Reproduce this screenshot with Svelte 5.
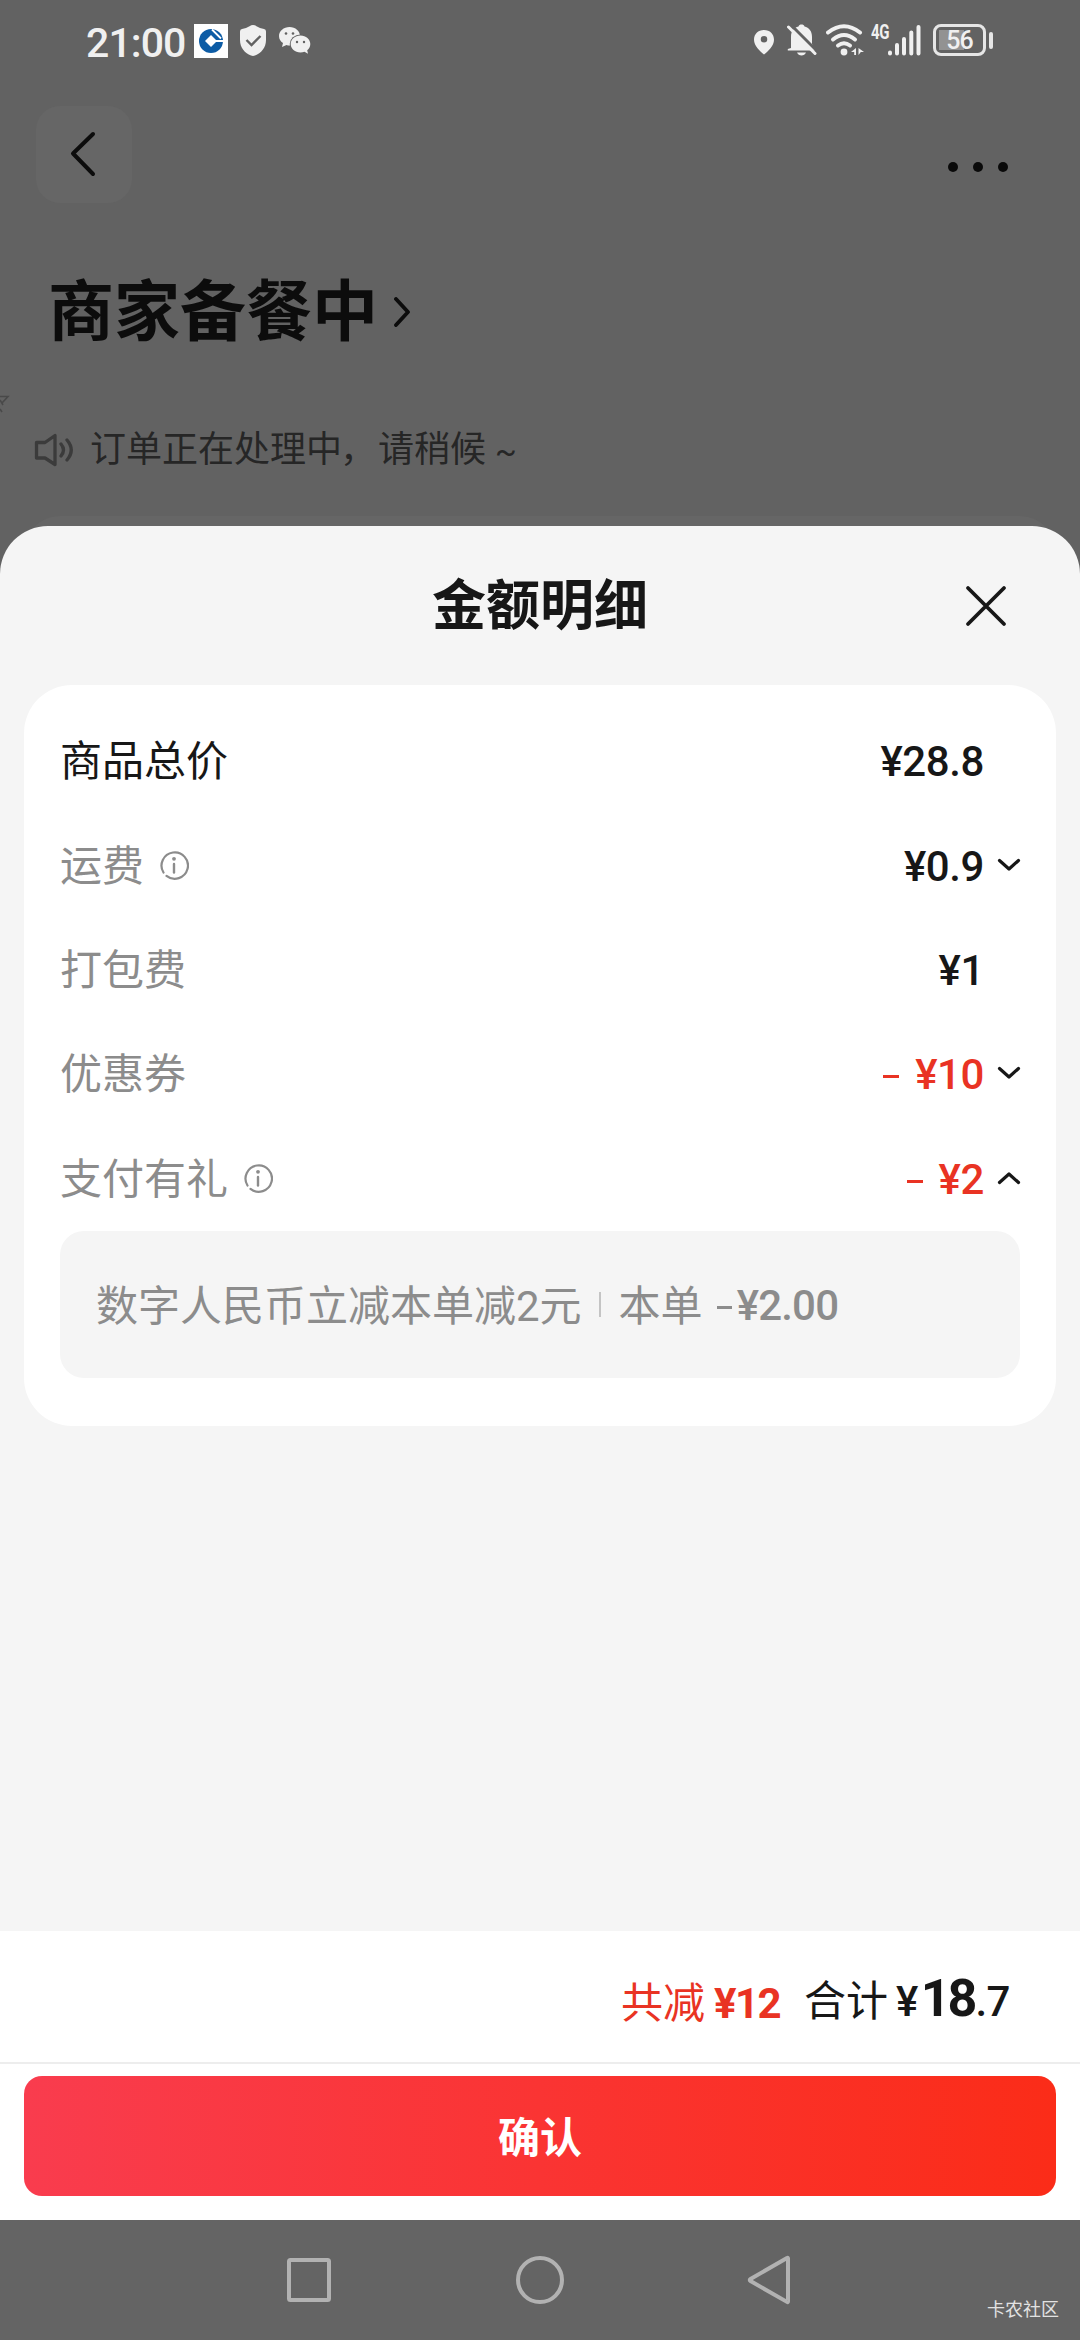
<script lang="ts">
  type Row = {
    label: string;
    amount: string;
    info?: boolean;
    discount?: boolean;
    toggle?: 'open' | 'closed';
  };

  const rows: Row[] = [
    { label: '商品总价', amount: '28.8' },
    { label: '运费', amount: '0.9', info: true, toggle: 'closed' },
    { label: '打包费', amount: '1' },
    { label: '优惠券', amount: '10', discount: true, toggle: 'closed' },
    { label: '支付有礼', amount: '2', info: true, discount: true, toggle: 'open' }
  ];
</script>

<div class="screen">
  <div class="status-bar">
    <span class="time">21:00</span>
    <svg class="bank" width="34" height="34" viewBox="0 0 34 34">
      <rect width="34" height="34" fill="#fff" />
      <circle cx="17" cy="17" r="12" fill="#0d5ca5" />
      <path d="M17 11l6 6-6 6-6-6z" fill="#fff" />
      <path d="M18 5.500l9 9M22 17h9" stroke="#fff" stroke-width="1.800" />
    </svg>
    <svg class="shield" width="26" height="31" viewBox="0 0 26 31">
      <path d="M13 0q2 0 3 1 4 2.500 8 3 2 .4 2 2.500V15c0 8-5 13-11 15.600q-2 .7-4 0C5 28 0 23 0 15V6.500Q0 4.400 2 4q4-.5 8-3 1-1 3-1z" fill="#f0f0f0" />
      <path d="M6.500 15l5 5 9-9" fill="none" stroke="#626262" stroke-width="2.400" />
    </svg>
    <svg class="wechat" width="33" height="28" viewBox="0 0 33 28">
      <path d="M10.500 0C4.700 0 0 4 0 9c0 3 1.500 5.500 4 7l-1 4 4.500-2q1.500.5 3 .5C16.500 18.500 21 14 21 9S16.500 0 10.500 0z" fill="#f0f0f0" />
      <ellipse cx="21.500" cy="17" rx="10.800" ry="9.400" fill="#626262" />
      <path d="M21.500 8.500c-5.500 0-9.800 3.800-9.800 8.500s4.300 8.500 9.800 8.500q2 0 4-.7l3.500 2-.8-3.500c2-1.500 3.100-3.800 3.100-6.300 0-4.700-4.300-8.500-9.800-8.500z" fill="#f0f0f0" />
      <g fill="#626262">
        <circle cx="7" cy="6.500" r="1.300" />
        <circle cx="14" cy="6.500" r="1.300" />
        <circle cx="18" cy="15" r="1.200" />
        <circle cx="25" cy="15" r="1.200" />
      </g>
    </svg>

    <div class="status-right">
      <svg class="pin" width="20" height="25" viewBox="0 0 20 25">
        <path d="M10 0C4 0 0 4.200 0 9.700 0 16 6 21 10 24.500 14 21 20 16 20 9.700 20 4.200 16 0 10 0zm0 6a3 3 0 1 1 0 6.500A3 3 0 0 1 10 6z" fill="#f0f0f0" fill-rule="evenodd" />
      </svg>
      <svg class="bell" width="30" height="32" viewBox="0 0 30 32">
        <path d="M4 24V13C4 7 7 3.500 11.500 2.500 12 1 13 .5 14.500.5S17 1 17.500 2.500C22 3.500 25 7 25 13v7l3 6v.5H.8V25zM10 28.500h9c-.8 2-2.500 3-4.500 3s-3.700-1-4.500-3z" fill="#f0f0f0" />
        <path d="M3.500.5L30 27" stroke="#626262" stroke-width="3" />
        <path d="M1.500 3L28 29.500" stroke="#f0f0f0" stroke-width="3" stroke-linecap="round" />
      </svg>
      <svg class="wifi" width="39" height="32" viewBox="0 0 39 32">
        <g fill="none" stroke="#f0f0f0" stroke-width="4" stroke-linecap="round">
          <path d="M2 8.500Q18 -4 34 8.500" />
          <path d="M7 15.500Q18 6.500 29 15.500" />
          <path d="M12 21.500Q18 17 24 21.500" />
        </g>
        <circle cx="18" cy="28" r="3.400" fill="#f0f0f0" />
        <path d="M30 24v7h-1.800v-3H25zM32.500 24l5.500 4h-3.200l-2.300 3z" fill="#f0f0f0" />
      </svg>
      <span class="network">4G</span>
      <svg class="signal" width="34" height="32" viewBox="0 0 34 32">
        <path d="M3 28.500v1M10 21v8.500M17 15v14.500M24.300 8.500v21M31.500 3v26.500" stroke="#f0f0f0" stroke-width="4" stroke-linecap="round" />
      </svg>
      <div class="battery"><span>56</span></div>
      <div class="battery-nub"></div>
    </div>
  </div>

  <header class="toolbar">
    <div class="back">
      <svg width="26" height="46" viewBox="0 0 26 46">
        <path d="M23 3L3 22.500 23 43" fill="none" stroke="#0c0c0c" stroke-width="4" stroke-linecap="round" stroke-linejoin="round" />
      </svg>
    </div>
    <div class="more"><i></i><i></i><i></i></div>
  </header>

  <div class="order-state">
    <h1>商家备餐中</h1>
    <svg width="18" height="30" viewBox="0 0 18 30">
      <path d="M3 2l12 13L3 28" fill="none" stroke="#0c0c0c" stroke-width="3.800" stroke-linecap="round" stroke-linejoin="round" />
    </svg>
  </div>

  <!-- tail of the rider line, scrolled out on the left -->
  <svg class="scrolled" width="12" height="22" viewBox="0 0 12 22">
    <path d="M0 2.500h8L2 9M0 6l3 5M0 15l2 3" fill="none" stroke="#494949" stroke-width="1.600" />
  </svg>

  <div class="notice">
    <svg width="40" height="34" viewBox="0 0 40 34">
      <g fill="none" stroke="#3b3b3b" stroke-width="3.300" stroke-linecap="round" stroke-linejoin="round">
        <path d="M2.500 9.500h8.500L21 2.500v29L11 25H2.500z" />
        <path d="M27 11q5 6 0 12M33 7q8.500 10 0 20" />
      </g>
    </svg>
    <span>订单正在处理中<em>，</em>请稍候 <small>~</small></span>
  </div>
  <div class="under-card"></div>

  <section class="sheet">
    <div class="sheet-head">
      <h2>金额明细</h2>
      <svg class="close" width="42" height="42" viewBox="0 0 42 42">
        <path d="M3 3l36 36M39 3L3 39" stroke="#171717" stroke-width="3.800" stroke-linecap="round" />
      </svg>
    </div>

    <div class="card">
      {#each rows as row, i}
        <div class="row" class:first={i === 0}>
          <span class="label">{row.label}</span>
          {#if row.info}
            <svg class="info" width="30" height="30" viewBox="0 0 30 30">
              <path d="M4.500 22.500A13.200 13.200 0 1 1 7.500 25.900" fill="none" stroke="#8c8c8c" stroke-width="2.200" stroke-linecap="round" />
              <circle cx="15" cy="8.800" r="1.900" fill="#8c8c8c" />
              <path d="M15 14v8.500" stroke="#8c8c8c" stroke-width="2.400" stroke-linecap="round" />
            </svg>
          {/if}
          <div class="amount" class:discount={row.discount}>
            {#if row.discount}<i class="minus"></i>{/if}
            <span>¥{row.amount}</span>
          </div>
          <div class="toggle">
            {#if row.toggle}
              <svg class:open={row.toggle === 'open'} width="24" height="14" viewBox="0 0 24 14">
                <path d="M2.500 2.500L12 11l9.500-8.500" fill="none" stroke="#171717" stroke-width="3.200" stroke-linecap="round" stroke-linejoin="round" />
              </svg>
            {/if}
          </div>
        </div>
      {/each}

      <div class="detail">
        <span class="desc">数字人民币立减本单减2元</span>
        <i class="bar"></i>
        <span class="desc">本单</span>
        <i class="dash"></i>
        <span class="num">¥2.00</span>
      </div>
    </div>

    <footer>
      <div class="summary">
        <span class="saved">共减</span>
        <span class="saved-num">¥12</span>
        <span class="total">合计</span>
        <span class="total-num">¥<b>18</b>.7</span>
      </div>
      <div class="confirm-wrap">
        <button>确认</button>
      </div>
    </footer>
  </section>

  <nav>
    <svg width="504" height="50" viewBox="0 0 504 50">
      <g fill="none" stroke="#b2b2b2" stroke-width="4" stroke-linejoin="round">
        <rect x="3" y="5" width="40" height="40" rx="1.500" />
        <circle cx="254" cy="25" r="22" />
        <path d="M502 3.500v43q0 1-1 .4L464.500 26q-1.500-1 0-2L501 3q1-.5 1 .5z" />
      </g>
    </svg>
    <span class="watermark">卡农社区</span>
  </nav>
</div>

<style>
  :global(body) {
    margin: 0;
  }

  .screen {
    position: relative;
    display: flex;
    flex-direction: column;
    width: 1080px;
    height: 2340px;
    overflow: hidden;
    background: #626262;
    font-family: Roboto, 'Noto Sans CJK SC', sans-serif;
    color: #171717;
  }

  svg {
    display: block;
    flex: none;
  }

  h1,
  h2 {
    margin: 0;
    font-weight: 700;
  }

  .status-bar {
    display: flex;
    align-items: flex-start;
    box-sizing: border-box;
    height: 106px;
    padding: 24px 88px 0 86px;
    color: #f0f0f0;
  }

  .time {
    width: 108px;
    margin-top: -1px;
    font-size: 41px;
    font-weight: 500;
    line-height: 40px;
    letter-spacing: -0.9px;
  }

  .shield {
    margin: 1px 0 0 12px;
  }

  .wechat {
    margin: 3px 0 0 13px;
  }

  .status-right {
    display: flex;
    align-items: flex-start;
    margin-left: auto;
  }

  .pin {
    margin: 6px 13px 0 0;
  }

  .bell {
    margin-right: 9px;
  }

  .wifi {
    margin-right: 6px;
  }

  .network {
    width: 16px;
    margin-top: 1px;
    font-size: 20px;
    font-weight: 700;
    line-height: 14px;
    letter-spacing: -0.5px;
    white-space: nowrap;
    transform: scaleX(0.75);
    transform-origin: left;
  }

  .signal {
    margin-right: 12px;
  }

  .battery {
    box-sizing: border-box;
    width: 53px;
    height: 32px;
    padding: 3px;
    border: 3px solid #e6e6e6;
    border-radius: 8px;
    background: linear-gradient(#929292, #929292) 3px 3px / 25px 20px no-repeat;
    font-size: 25px;
    font-weight: 500;
    line-height: 22px;
    letter-spacing: -1px;
    text-align: center;
  }

  .battery-nub {
    width: 4px;
    height: 17px;
    margin: 8px -1px 0 3px;
    border-radius: 2px;
    background: #e6e6e6;
  }

  .toolbar {
    display: flex;
    justify-content: space-between;
    height: 97px;
    padding: 0 72px 0 36px;
  }

  .back {
    display: flex;
    align-items: center;
    justify-content: center;
    box-sizing: border-box;
    width: 96px;
    height: 97px;
    padding: 0 2px 2px 0;
    border-radius: 24px;
    background: #666;
  }

  .more {
    display: flex;
    gap: 15px;
    margin-top: 56px;
  }

  .more i {
    width: 10px;
    height: 10px;
    border-radius: 50%;
    background: #0a0a0a;
  }

  .order-state {
    display: flex;
    align-items: center;
    gap: 15px;
    height: 100px;
    margin-top: 60px;
    padding-left: 48px;
  }

  .order-state h1 {
    font-size: 66px;
    line-height: 100px;
    color: #0c0c0c;
  }

  .order-state svg {
    margin-top: -2px;
  }

  .scrolled {
    margin: 31px 0 -53px;
  }

  .notice {
    display: flex;
    align-items: center;
    gap: 16px;
    height: 60px;
    margin-top: 57px;
    padding-left: 34px;
    font-size: 36px;
    line-height: 60px;
    color: #262626;
  }

  .notice em {
    margin: 0 2px 0 -2px;
    font-style: normal;
  }

  .notice small {
    font-size: 32px;
  }

  .under-card {
    flex: none;
    height: 60px;
    margin: 36px 24px -50px;
    border-radius: 36px 36px 0 0;
    background: #666;
  }

  .sheet {
    position: relative;
    display: flex;
    flex-direction: column;
    flex: none;
    height: 1694px;
    border-radius: 48px 48px 0 0;
    overflow: hidden;
    background: #f5f5f5;
  }

  .sheet-head {
    position: relative;
    display: flex;
    align-items: center;
    justify-content: center;
    height: 159px;
  }

  .sheet-head h2 {
    padding-top: 3px;
    font-size: 54px;
    line-height: 80px;
  }

  .close {
    position: absolute;
    top: 59px;
    right: 73px;
  }

  .card {
    box-sizing: border-box;
    height: 741px;
    margin: 0 24px;
    padding: 24px 36px 0;
    border-radius: 48px;
    background: #fff;
  }

  .row {
    display: flex;
    align-items: center;
    height: 104.4px;
  }

  .label {
    padding-top: 2px;
    font-size: 42px;
    line-height: 60px;
    color: #8c8c8c;
  }

  .first .label {
    color: #171717;
  }

  .info {
    margin: -2px 0 0 15px;
  }

  .amount {
    display: flex;
    align-items: center;
    margin: 1px -1px 0 auto;
    font-size: 42px;
    font-weight: 500;
    letter-spacing: -0.4px;
  }

  .discount {
    color: #e93323;
  }

  .minus {
    width: 16px;
    height: 3px;
    margin: 4px 16px 0 0;
    background: currentColor;
  }

  .toggle {
    display: flex;
    justify-content: flex-end;
    width: 37px;
  }

  .toggle svg {
    margin: -2px -1px 0 0;
  }

  .open {
    transform: rotate(180deg);
  }

  .detail {
    display: flex;
    align-items: center;
    height: 147px;
    padding-left: 36px;
    border-radius: 24px;
    background: #f5f5f5;
    font-size: 42px;
    color: #8c8c8c;
  }

  .desc {
    margin-top: -4px;
  }

  .bar {
    width: 2px;
    height: 25px;
    margin: 0 18px 0 17px;
    background: #c4c4c4;
  }

  .dash {
    width: 15px;
    height: 3px;
    margin: 6px 5px 0 14px;
    background: #8c8c8c;
  }

  .num {
    padding-top: 2px;
    font-weight: 500;
    letter-spacing: -0.8px;
  }

  footer {
    height: 289px;
    margin-top: auto;
    background: #fff;
  }

  .summary {
    display: flex;
    align-items: baseline;
    justify-content: flex-end;
    box-sizing: border-box;
    height: 133px;
    padding: 38px 70px 0 0;
    border-bottom: 2px solid #ededed;
    font-size: 42px;
    line-height: 60px;
  }

  .saved,
  .saved-num {
    position: relative;
    top: 2px;
    color: #e93323;
  }

  .saved-num {
    margin: 0 24px 0 9px;
    font-weight: 700;
    letter-spacing: -1.6px;
  }

  .total-num {
    margin-left: 8px;
    font-weight: 500;
    letter-spacing: -0.5px;
  }

  .total-num b {
    margin: 0 1px 0 3px;
    font-size: 52px;
    letter-spacing: -3px;
  }

  .confirm-wrap {
    padding: 12px 24px 24px;
  }

  button {
    display: block;
    width: 100%;
    height: 120px;
    padding: 0 0 2px;
    border: 0;
    border-radius: 18px;
    background: linear-gradient(90deg, #f93c4e, #fb2c18);
    font: 700 42px/116px 'Noto Sans CJK SC', sans-serif;
    color: #fff;
  }

  nav {
    position: relative;
    height: 120px;
    flex: none;
    background: #646464;
  }

  nav svg {
    margin: 35px 0 0 286px;
  }

  .watermark {
    position: absolute;
    right: 21px;
    bottom: 18px;
    font-size: 18px;
    line-height: 24px;
    color: #e2e2e2;
  }
</style>
